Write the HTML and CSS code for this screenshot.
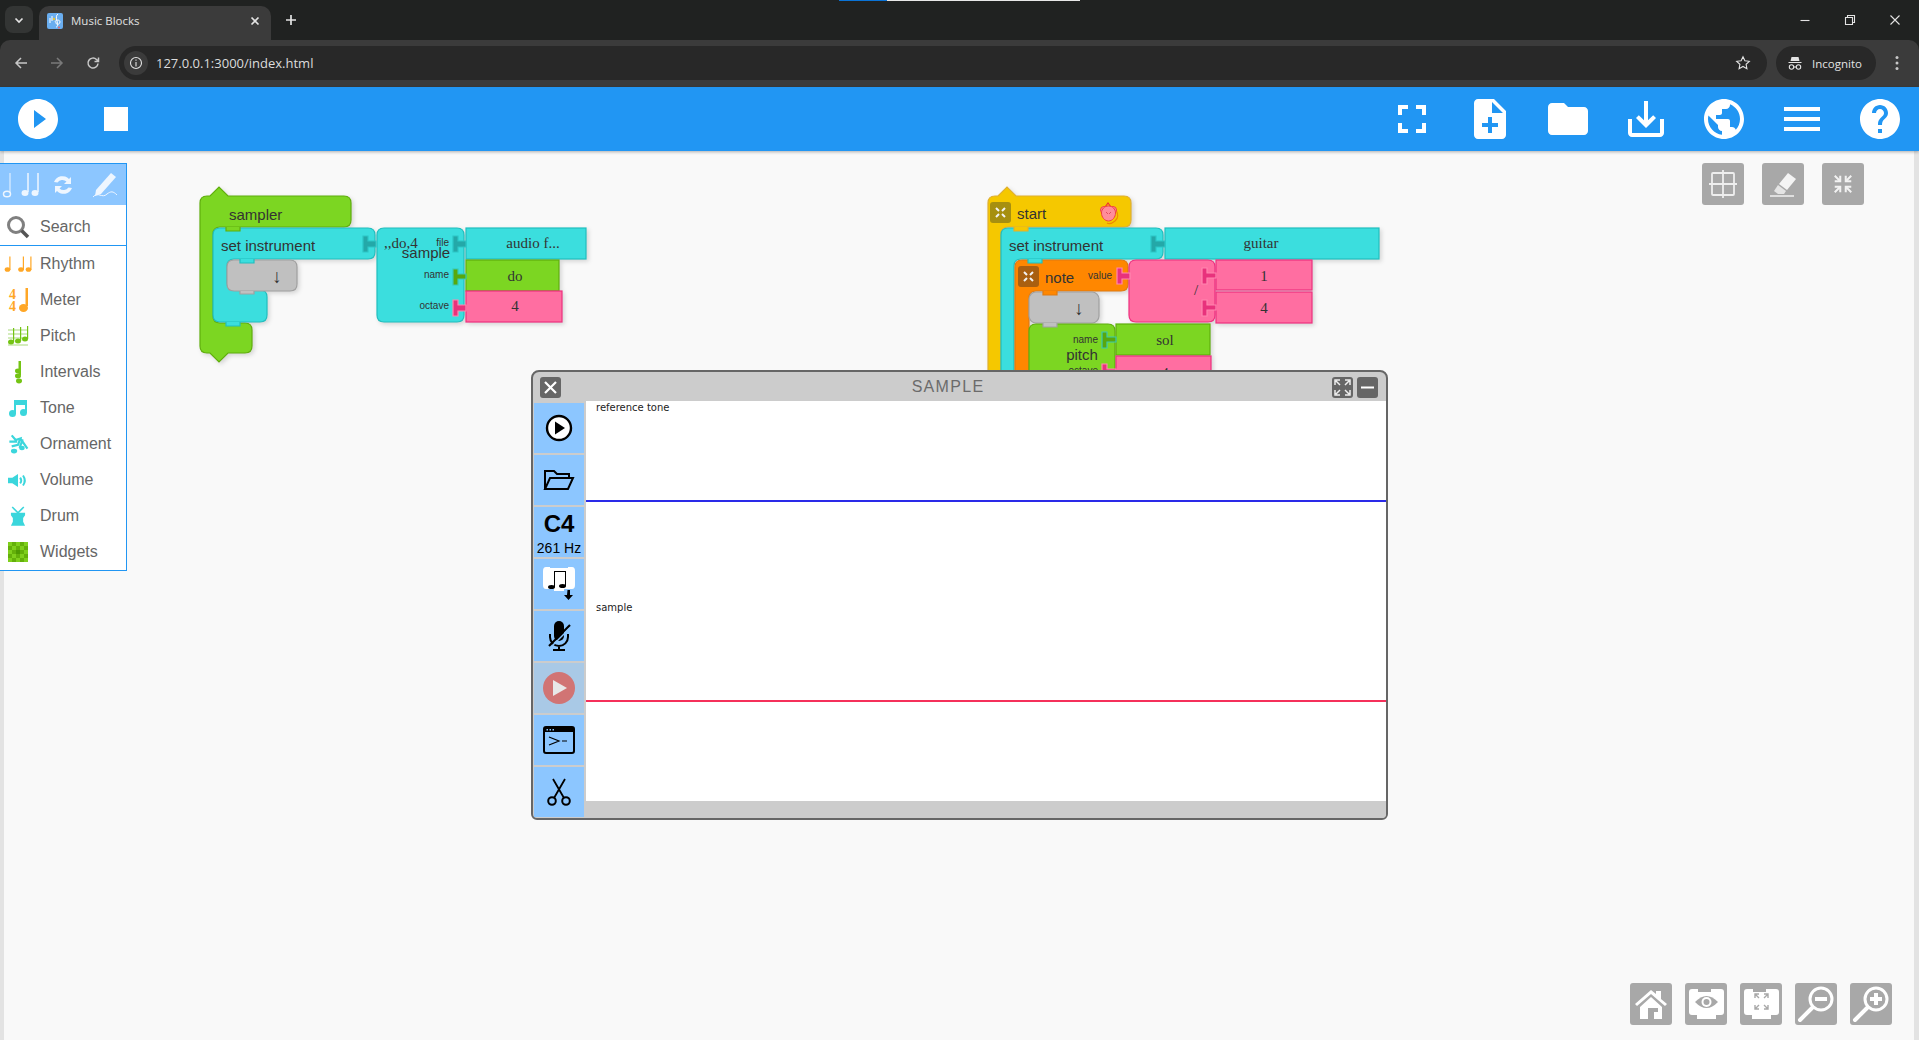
FILE: index.html
```html
<!DOCTYPE html>
<html lang="en">
<head>
<meta charset="utf-8">
<title>Music Blocks</title>
<link rel="stylesheet" href="styles.css">
</head>
<body>
<div class="app">

  <header class="chrome">
    <div class="share-strip"><span class="share-blue"></span><span class="share-white"></span></div>
    <div class="tabstrip">
      <button class="tab-search"><svg width="12" height="12" viewBox="0 0 12 12"><path class="ch-stroke" d="M2.500 4.500 6 8l3.500-3.500"/></svg></button>
      <div class="tab">
        <svg class="favicon" width="16" height="16" viewBox="0 0 16 16"><rect width="16" height="16" rx="2" fill="#6aaef0"/><path d="M11 1c-2 1-2 4-1 7s1 6-1 6M8 9c0-2 5-3 5 0s-5 3-4 0" fill="none" stroke="#fff" stroke-width="1"/><path d="M3 5v5M5 3v5" stroke="#fff"/><circle cx="7" cy="6" r="1.200" fill="#e8c43a"/><circle cx="12" cy="14.500" r="1" fill="#e66"/></svg>
        <span class="tab-title">Music Blocks</span>
        <svg class="tab-close" width="12" height="12" viewBox="0 0 12 12"><path class="ch-stroke" d="M2.500 2.500l7 7M9.500 2.500l-7 7"/></svg>
      </div>
      <svg class="new-tab" width="14" height="14" viewBox="0 0 14 14"><path class="ch-stroke" d="M7 2v10M2 7h10"/></svg>
      <div class="win-controls">
        <svg width="12" height="12" viewBox="0 0 12 12"><path class="ch-thin" d="M1.500 6.500h9"/></svg>
        <svg width="12" height="12" viewBox="0 0 12 12"><path class="ch-thin" d="M1.500 3.500h7v7h-7zM3.500 3.500v-2h7v7h-2"/></svg>
        <svg width="12" height="12" viewBox="0 0 12 12"><path class="ch-thin" d="M1.500 1.500l9 9M10.500 1.500l-9 9"/></svg>
      </div>
    </div>
    <div class="toolbar">
      <svg class="nav-ico" width="14" height="14" viewBox="0 0 14 14"><path class="ch-nav" d="M13 7H2M7 2 2 7l5 5"/></svg>
      <svg class="nav-ico dim" width="14" height="14" viewBox="0 0 14 14"><path class="ch-nav" d="M1 7h11M7 2l5 5-5 5"/></svg>
      <svg class="nav-ico" width="14" height="14" viewBox="0 0 14 14"><path class="ch-nav" d="M12 7.500A5 5 0 1 1 10.500 3.500L12.500 5.500M12.500 1.500v4h-4"/></svg>
      <div class="urlbar">
        <span class="info"><svg width="14" height="14" viewBox="0 0 14 14"><circle class="ch-thin" cx="7" cy="7" r="5.500"/><path class="ch-thin" d="M7 6v4.500M7 3.500v1.300"/></svg></span>
        <span class="url">127.0.0.1:3000/index.html</span>
        <svg class="star" width="16" height="16" viewBox="0 0 16 16"><path class="ch-thin" d="m8 1.800 1.900 4 4.400.5-3.200 3 .8 4.400L8 11.500l-3.900 2.200.8-4.400-3.200-3 4.400-.5z"/></svg>
      </div>
      <div class="incognito">
        <svg width="16" height="16" viewBox="0 0 16 16"><path d="M4.500 2h7l1 4h-9zM1.500 7h13v1h-13z" fill="#e3e3e3"/><circle class="ch-thin" cx="4.500" cy="12" r="2.200"/><circle class="ch-thin" cx="11.500" cy="12" r="2.200"/><path class="ch-thin" d="M6.700 12h2.600"/></svg>
        <span>Incognito</span>
      </div>
      <svg class="kebab" width="4" height="16" viewBox="0 0 4 16"><circle cx="2" cy="2.500" r="1.500"/><circle cx="2" cy="8" r="1.500"/><circle cx="2" cy="13.500" r="1.500"/></svg>
    </div>
  </header>

  <nav class="navbar">
    <div class="nav-group">
      <svg class="tool" viewBox="0 0 24 24"><path d="M12 2C6.480 2 2 6.480 2 12s4.480 10 10 10 10-4.480 10-10S17.520 2 12 2zm-2 14.500v-9l6 4.500-6 4.500z"/></svg>
      <svg class="tool" viewBox="0 0 24 24"><path d="M6 6h12v12H6z"/></svg>
    </div>
    <div class="nav-group">
      <svg class="tool" viewBox="0 0 24 24"><path d="M7 14H5v5h5v-2H7v-3zm-2-4h2V7h3V5H5v5zm12 7h-3v2h5v-5h-2v3zM14 5v2h3v3h2V5h-5z"/></svg>
      <svg class="tool" viewBox="0 0 24 24"><path d="M14 2H6c-1.100 0-1.990.9-1.990 2L4 20c0 1.100.89 2 1.990 2H18c1.100 0 2-.9 2-2V8l-6-6zm2 14h-3v3h-2v-3H8v-2h3v-3h2v3h3v2zm-3-7V3.500L18.500 9H13z"/></svg>
      <svg class="tool" viewBox="0 0 24 24"><path d="M10 4H4c-1.100 0-1.990.9-1.990 2L2 18c0 1.100.9 2 2 2h16c1.100 0 2-.9 2-2V8c0-1.100-.9-2-2-2h-8l-2-2z"/></svg>
      <svg class="tool" viewBox="0 0 24 24"><path d="M19 12v7H5v-7H3v7c0 1.100.9 2 2 2h14c1.100 0 2-.9 2-2v-7h-2zm-6 .670 2.590-2.580L17 11.500l-5 5-5-5 1.410-1.410L11 12.670V3h2z"/></svg>
      <svg class="tool" viewBox="0 0 24 24"><path d="M12 2C6.480 2 2 6.480 2 12s4.480 10 10 10 10-4.480 10-10S17.520 2 12 2zm-1 17.930c-3.950-.49-7-3.850-7-7.930 0-.62.08-1.210.21-1.790L9 15v1c0 1.100.9 2 2 2v1.930zm6.900-2.540c-.26-.81-1-1.390-1.900-1.390h-1v-3c0-.55-.45-1-1-1H8v-2h2c.55 0 1-.45 1-1V7h2c1.100 0 2-.9 2-2v-.41c2.930 1.190 5 4.060 5 7.410 0 2.080-.8 3.970-2.100 5.390z"/></svg>
      <svg class="tool" viewBox="0 0 24 24"><path d="M3 18h18v-2H3v2zm0-5h18v-2H3v2zm0-7v2h18V6H3z"/></svg>
      <svg class="tool" viewBox="0 0 24 24"><path d="M12 2C6.480 2 2 6.480 2 12s4.480 10 10 10 10-4.480 10-10S17.520 2 12 2zm1 17h-2v-2h2v2zm2.070-7.750-.9.920C13.450 12.900 13 13.500 13 15h-2v-.5c0-1.100.45-2.100 1.170-2.830l1.240-1.260c.37-.36.59-.86.59-1.410 0-1.100-.9-2-2-2s-2 .9-2 2H8c0-2.210 1.790-4 4-4s4 1.790 4 4c0 .88-.36 1.680-.93 2.250z"/></svg>
    </div>
  </nav>

  <main class="workspace">

    <!-- Block stacks sit on a free canvas; the viewBoxes use page coordinates -->
    <svg class="stack stack-a" width="410" height="190" viewBox="190 180 410 190">
      <g class="blk">
        <path class="g" d="M207 196H210L219 187L228 196H344Q351 196 351 203V220Q351 227 344 227H220Q213 227 213 234V316Q213 323 220 323H245Q252 323 252 330V346Q252 353 245 353H228L219 362L210 353H207Q200 353 200 346V203Q200 196 207 196Z"/>
        <path class="c" d="M220 228H368Q375 228 375 235V252Q375 259 368 259H234Q227 259 227 266V283Q227 290 234 290H260Q267 290 267 297V315Q267 322 260 322H220Q213 322 213 315V235Q213 228 220 228Z"/>
        <path class="n" d="M234 260H290Q297 260 297 267V284Q297 291 290 291H234Q227 291 227 284V267Q227 260 234 260Z"/>
        <path class="c" d="M384 228H457Q464 228 464 235V315Q464 322 457 322H384Q377 322 377 315V235Q377 228 384 228Z"/>
        <rect class="c" x="466" y="228" width="120" height="31"/>
        <rect class="g" x="466" y="260" width="93" height="31"/>
        <rect class="p" x="466" y="291" width="96" height="31"/>
      </g>
      <path class="g" d="M226 227v4h14v-4"/>
      <path class="c" d="M240 259v4h14v-4"/>
      <path class="c" d="M226 322v4h14v-4"/>
      <path class="n" d="M240 291v3h14v-3"/>
      <path class="conn-c" d="M363 236h5v5h8v6h-8v5h-5z"/>
      <path class="conn-c" d="M453 236h5v5h8v6h-8v5h-5z"/>
      <path class="conn-g" d="M453 269h5v5h8v5h-8v6h-5z"/>
      <path class="conn-p" d="M453 300h5v5h8v6h-8v5h-5z"/>
      <text class="t-sans" x="229" y="220">sampler</text>
      <text class="t-sans" x="221" y="251">set instrument</text>
      <text class="t-arrow" x="277" y="283">↓</text>
      <text class="t-serif" x="384" y="248">,,do,4</text>
      <text class="t-sans t-mid" x="426" y="258">sample</text>
      <text class="t-lab" x="449" y="246">file</text>
      <text class="t-lab" x="449" y="278">name</text>
      <text class="t-lab" x="449" y="309">octave</text>
      <text class="t-serif t-mid" x="533" y="248">audio f...</text>
      <text class="t-serif t-mid" x="515" y="281">do</text>
      <text class="t-serif t-mid" x="515" y="311">4</text>
    </svg>

    <svg class="stack stack-b" width="420" height="200" viewBox="970 180 420 200">
      <g class="blk">
        <path class="y" d="M995 196H998L1007 187L1016 196H1124Q1131 196 1131 203V220Q1131 227 1124 227H1008Q1001 227 1001 234V380H988V203Q988 196 995 196Z"/>
        <path class="c" d="M1008 228H1156Q1163 228 1163 235V252Q1163 259 1156 259H1021Q1014 259 1014 266V380H1001V235Q1001 228 1008 228Z"/>
        <rect class="c" x="1165" y="228" width="214" height="31"/>
        <path class="o" d="M1022 260H1121Q1128 260 1128 267V284Q1128 291 1121 291H1036Q1029 291 1029 298V380H1015V267Q1015 260 1022 260Z"/>
        <path class="p" d="M1136 260H1208Q1215 260 1215 267V315Q1215 322 1208 322H1136Q1129 322 1129 315V267Q1129 260 1136 260Z"/>
        <rect class="p" x="1216" y="260" width="96" height="30"/>
        <rect class="p" x="1216" y="292" width="96" height="31"/>
        <rect class="n" x="1029" y="292" width="70" height="31" rx="7"/>
        <path class="g" d="M1036 324H1108Q1115 324 1115 331V380H1029V331Q1029 324 1036 324Z"/>
        <rect class="g" x="1116" y="324" width="94" height="31"/>
        <rect class="p" x="1116" y="356" width="95" height="30"/>
      </g>
      <path class="y" d="M1014 227v4h14v-4"/>
      <path class="c" d="M1028 259v4h14v-4"/>
      <path class="o" d="M1043 291v4h14v-4"/>
      <path class="n" d="M1043 323v4h14v-4"/>
      <path class="conn-c" d="M1151 236h5v5h9v6h-9v5h-5z"/>
      <path class="conn-p" d="M1117 268h5v5h8v6h-8v5h-5z"/>
      <path class="conn-p" d="M1202 268h5v5h9v5h-9v6h-5z"/>
      <path class="conn-p" d="M1202 300h5v5h9v5h-9v6h-5z"/>
      <path class="conn-g" d="M1102 332h5v5h9v5h-9v6h-5z"/>
      <path class="conn-p" d="M1102 364h5v5h9v5h-9v6h-5z"/>
      <rect class="collapse-y" x="990" y="202" width="21" height="21" rx="3"/>
      <rect class="collapse-o" x="1018" y="266" width="21" height="21" rx="3"/>
      <path class="collapse-ico" d="M996 208l3 3M1005 208l-3 3M996 217l3-3M1005 217l-3-3M1024 272l3 3M1033 272l-3 3M1024 281l3-3M1033 281l-3-3"/>
      <path class="mouse-tail" d="M1116 210q4 7-1 11t-8 2"/>
      <path class="mouse-crest" d="M1105 207l3-4 3 4"/>
      <circle class="mouse-body" cx="1104" cy="210" r="3.500"/>
      <circle class="mouse-body" cx="1113" cy="210" r="3.500"/>
      <path class="mouse-body" d="M1108.500 206c4 0 7 3 7 7s-3 8-7 8-7-4-7-8 3-7 7-7z"/>
      <path class="mouse-line" d="M1106 212l2 2M1111 212l-2 2"/>
      <text class="t-sans" x="1017" y="219">start</text>
      <text class="t-sans" x="1009" y="251">set instrument</text>
      <text class="t-sans" x="1045" y="283">note</text>
      <text class="t-lab" x="1112" y="279">value</text>
      <text class="t-arrow" x="1079" y="315">↓</text>
      <text class="t-serif t-mid" x="1261" y="248">guitar</text>
      <text class="t-serif" x="1194" y="295">/</text>
      <text class="t-serif t-mid" x="1264" y="281">1</text>
      <text class="t-serif t-mid" x="1264" y="313">4</text>
      <text class="t-serif t-mid" x="1165" y="345">sol</text>
      <text class="t-serif t-mid" x="1165" y="378">4</text>
      <text class="t-lab" x="1098" y="343">name</text>
      <text class="t-lab" x="1098" y="374">octave</text>
      <text class="t-sans t-mid" x="1082" y="360">pitch</text>
    </svg>

    <aside class="palette">
      <div class="pal-head">
        <svg width="127" height="40" viewBox="0 0 127 40">
          <g class="pal-white">
            <ellipse cx="7" cy="30" rx="3.500" ry="2.800" fill="none" stroke="#eef6ff" stroke-width="1.500"/>
            <path d="M10 29V9" stroke="#eef6ff" stroke-width="1" fill="none"/>
            <ellipse cx="25" cy="29" rx="3.500" ry="3"/><ellipse cx="35" cy="29" rx="3.500" ry="3"/>
            <path d="M28 28V9M38 28V9" stroke="#eef6ff" stroke-width="1.500" fill="none"/>
            <path d="M54 18a9 9 0 0 1 15-3l2-2v7h-7l2.500-2.500a6 6 0 0 0-9 1zM72 24a9 9 0 0 1-15 3l-2 2v-7h7l-2.500 2.500a6 6 0 0 0 9-1z"/>
            <path d="M96 26 111 9l5 4-15 17-6 2z"/>
            <path d="M93 33c5-6 9 2 14-3 4-3 6-3 10 1" fill="none" stroke="#eef6ff" stroke-width="1"/>
          </g>
        </svg>
      </div>
      <div class="pal-search">
        <span class="pal-ico"><svg width="24" height="24" viewBox="0 0 24 24"><circle cx="10" cy="10" r="7.500" fill="none" stroke="#808080" stroke-width="3"/><path d="m15.500 15.500 6.500 6.500" stroke="#555" stroke-width="3.500"/></svg></span>
        <span>Search</span>
      </div>
      <ul class="pal-list">
        <li class="pal-item"><span class="pal-ico"><svg width="28" height="18" viewBox="0 0 28 18"><g fill="#ffa726"><ellipse cx="3.500" cy="14.500" rx="2.800" ry="2.300"/><ellipse cx="17" cy="14.500" rx="2.800" ry="2.300"/><ellipse cx="24.500" cy="14.500" rx="2.800" ry="2.300"/><path d="M5.300 15V1.500h1.200V15zM18.800 15V1.500H20V15zM26.300 15V1.500h1.200V15z"/></g></svg></span>Rhythm</li>
        <li class="pal-item"><span class="pal-ico"><svg width="28" height="26" viewBox="0 0 28 26"><g fill="#ffa726"><path d="M21.500 19V1H24v18z"/><ellipse cx="19.500" cy="21" rx="4.500" ry="4"/></g><text class="ico-digit" x="5" y="12">4</text><text class="ico-digit" x="5" y="24">4</text></svg></span>Meter</li>
        <li class="pal-item"><span class="pal-ico"><svg width="28" height="20" viewBox="-4 0 28 20"><path d="M0 4h20M0 8h20M0 12h20M0 19h20" stroke="#a9d97a"/><g fill="#74c414"><ellipse cx="3" cy="16" rx="3" ry="2.500"/><ellipse cx="10" cy="15" rx="3" ry="2.500"/><ellipse cx="17" cy="13" rx="3" ry="2.500"/><path d="M5 16V2h1.200v14zM12 15V1h1.200v14zM19 13V0h1.200v13z"/></g></svg></span>Pitch</li>
        <li class="pal-item"><span class="pal-ico"><svg width="28" height="24" viewBox="0 0 28 24"><g fill="#74c414"><path d="M14.500 1H17v14h-2.500z"/><ellipse cx="14" cy="11" rx="3" ry="2.400"/><ellipse cx="14" cy="16" rx="3" ry="2.400"/><ellipse cx="15" cy="21" rx="3" ry="2.400"/></g></svg></span>Intervals</li>
        <li class="pal-item"><span class="pal-ico"><svg width="18" height="17" viewBox="0 0 18 17"><path fill="#3bd6dc" d="M5 0h13v13h-2V5H7v9H5z"/><circle cx="3.500" cy="13.500" r="3.500" fill="#3bd6dc"/><circle cx="14.500" cy="12.500" r="3.500" fill="#3bd6dc"/></svg></span>Tone</li>
        <li class="pal-item"><span class="pal-ico"><svg width="22" height="24" viewBox="0 0 28 24"><g fill="none" stroke="#3bd6dc" stroke-width="2.800"><path d="M6 1l5 6 6-2-3 8-8 2M17 5l9 13M20 6l-4 11M3 9h10"/></g><g fill="#3bd6dc"><ellipse cx="9" cy="21" rx="4" ry="3"/><ellipse cx="19" cy="17" rx="3.500" ry="2.800"/></g></svg></span>Ornament</li>
        <li class="pal-item"><span class="pal-ico"><svg width="20" height="15" viewBox="0 0 28 18"><path fill="#3bd6dc" d="M0 5h6l8-5v18l-8-5H0z"/><g fill="none" stroke="#3bd6dc" stroke-width="2.800"><path d="M17 5q3 4 0 8M21 2q5 7 0 14"/></g></svg></span>Volume</li>
        <li class="pal-item"><span class="pal-ico"><svg width="18" height="20" viewBox="0 0 28 30"><path fill="#3bd6dc" d="M3 10h22v4l-3 4v6l3 6H3l3-6v-6l-3-4z"/><path d="M5 1l9 9 9-9" fill="none" stroke="#3bd6dc" stroke-width="2.500"/></svg></span>Drum</li>
        <li class="pal-item"><span class="pal-ico"><svg width="20" height="20" viewBox="0 0 20 20"><rect width="20" height="20" fill="#64b00a"/><path fill="#7fcf1c" d="M0 0h4v4H0zM8 0h4v4H8zM16 0h4v4h-4zM4 4h4v4H4zM12 4h4v4h-4zM0 8h4v4H0zM16 8h4v4h-4zM4 12h4v4H4zM12 12h4v4h-4zM0 16h4v4H0zM8 16h4v4H8zM16 16h4v4h-4z"/><path fill="#4e9a02" d="M8 8h4v4H8z"/></svg></span>Widgets</li>
      </ul>
    </aside>

    <div class="aux-tools">
      <button class="icon-btn"><svg width="28" height="28" viewBox="0 0 28 28"><g fill="none" stroke="#eee" stroke-width="1.800"><rect x="3" y="3" width="22" height="22" rx="1"/><path d="M14 0v28M0 14h28"/></g></svg></button>
      <button class="icon-btn"><svg width="28" height="28" viewBox="0 0 28 28"><path fill="#f4f4f4" d="m10 14 9-11 8 6-9 11z"/><path fill="#e4e4e4" d="m9 15 8 6-2 3H9l-4-3z"/><path d="M1 26h24" stroke="#f2f2f2" stroke-width="1.500"/></svg></button>
      <button class="icon-btn"><svg width="22" height="22" viewBox="0 0 24 24"><g fill="none" stroke="#f2f2f2" stroke-width="2.200"><path d="M3 3l6 6M21 3l-6 6M3 21l6-6M21 21l-6-6"/><path d="M9 3v6H3M15 3v6h6M9 21v-6H3M15 21v-6h6"/></g></svg></button>
    </div>

    <div class="home-tools">
      <button class="icon-btn"><svg width="34" height="34" viewBox="0 0 34 34"><path fill="#fff" d="M1 17 17 3l5 4V4h5v8l6 5-2 2-14-12L3 19zM6 20 17 10l11 10v12h-8V21h-6v11H6z"/><path fill="#a8a8a8" d="M20 21h4v4h-4z"/></svg></button>
      <button class="icon-btn"><svg width="35" height="30" viewBox="0 0 35 30"><path fill="#fff" d="M3 0h6v3h13V0h10q3 0 3 3v20q0 3-3 3h-5v4H8v-4H3q-3 0-3-3V3q0-3 3-3z"/><path d="M6 13q11.500-12 23 0-11.500 12-23 0z" fill="#a8a8a8"/><circle cx="17.500" cy="13" r="5" fill="#fff"/><circle cx="17.500" cy="13" r="3" fill="#a8a8a8"/></svg></button>
      <button class="icon-btn"><svg width="35" height="30" viewBox="0 0 35 30"><path fill="#fff" d="M3 0h6v3h13V0h10q3 0 3 3v20q0 3-3 3h-5v4H8v-4H3q-3 0-3-3V3q0-3 3-3z"/><g fill="none" stroke="#a8a8a8" stroke-width="1.400"><path d="M11 9V5h4M24 9V5h-4M11 16v4h4M24 16v4h-4M11 5l4 4M24 5l-4 4M11 20l4-4M24 20l-4-4"/></g></svg></button>
      <button class="icon-btn"><svg width="38" height="38" viewBox="0 0 38 38"><g fill="none" stroke="#fff"><circle cx="24" cy="14" r="11" stroke-width="3"/><path d="M15 23 3 35" stroke-width="4" stroke-linecap="round"/><path d="M18 14h12" stroke-width="4"/></g></svg></button>
      <button class="icon-btn"><svg width="38" height="38" viewBox="0 0 38 38"><g fill="none" stroke="#fff"><circle cx="24" cy="14" r="11" stroke-width="3"/><path d="M15 23 3 35" stroke-width="4" stroke-linecap="round"/><path d="M18 14h12M24 8v12" stroke-width="4"/></g></svg></button>
    </div>

    <section class="sampler-window">
      <div class="win-title">
        <button class="win-btn"><svg width="15" height="15" viewBox="0 0 15 15"><path d="M2 2l11 11M13 2 2 13" stroke="#fff" stroke-width="2.200"/></svg></button>
        <span class="win-name">SAMPLE</span>
        <button class="win-btn"><svg width="17" height="17" viewBox="0 0 17 17"><g fill="none" stroke="#eee" stroke-width="1.500"><path d="M1 6V1h5M11 1h5v5M1 11v5h5M16 11v5h-5M2 2l4 4M15 2l-4 4M2 15l4-4M15 15l-4-4"/></g></svg></button>
        <button class="win-btn"><svg width="15" height="15" viewBox="0 0 15 15"><path d="M1 7.500h13" stroke="#fff" stroke-width="2"/></svg></button>
      </div>
      <div class="win-body">
        <div class="win-side">
          <button class="side-btn"><svg width="30" height="30" viewBox="0 0 30 30"><circle cx="15" cy="15" r="12" fill="#fff" stroke="#000" stroke-width="2.400"/><path d="M11 8.500v13l10-6.500z"/></svg></button>
          <button class="side-btn"><svg width="32" height="24" viewBox="0 0 32 24"><path fill="none" stroke="#000" stroke-width="2" d="M2 21V3h9l3 3h12v4M2 21h23l5-11H7z"/></svg></button>
          <div class="side-btn pitch-btn"><b>C4</b><span>261 Hz</span></div>
          <button class="side-btn"><svg width="34" height="34" viewBox="0 0 34 34"><path fill="#fff" d="M4 0h4v1h18V0h4q3 0 3 4v14q0 4-3 4H22v2H12v-2H4q-3 0-3-4V4q0-4 3-4z"/><g fill="#000"><path d="M12 4h12v15h-1V5H13v15h-1z"/><ellipse cx="9.500" cy="20" rx="3.500" ry="2"/><ellipse cx="20.500" cy="19" rx="3.500" ry="2"/><path d="M25.500 23h2.500v5h3l-4.500 5-4.500-5h3z"/></g></svg></button>
          <button class="side-btn"><svg width="24" height="32" viewBox="0 0 24 32"><path d="M7 6a5 5 0 0 1 10 0v10a5 5 0 0 1-10 0z"/><path fill="none" stroke="#000" stroke-width="2" d="M3 14v3a9 9 0 0 0 18 0v-3M12 26v3"/><path d="M6 29h12v2H6z"/><path d="M23 5 2 26" stroke="#000" stroke-width="2.200"/><path d="M23 8 6 25" stroke="#8cc6ff" stroke-width="1.500"/></svg></button>
          <button class="side-btn rec-btn"><svg width="32" height="32" viewBox="0 0 32 32"><circle cx="16" cy="16" r="16" fill="#d17474"/><path d="M10 8v16l14-8z" fill="#e8e8e8"/></svg></button>
          <button class="side-btn"><svg width="32" height="28" viewBox="0 0 32 28"><rect x="1" y="1" width="30" height="26" rx="2" fill="none" stroke="#000" stroke-width="2"/><path d="M1 2h30v4H1z"/><path d="M6 11l10 4-10 4M19 15h5" fill="none" stroke="#000" stroke-width="1.200"/><path d="M3.500 3h1.500v1.500H3.500zM6.500 3H8v1.500H6.500zM9.500 3H11v1.500H9.500z" fill="#8cc6ff"/></svg></button>
          <button class="side-btn"><svg width="24" height="28" viewBox="0 0 24 28"><circle cx="5" cy="23" r="3.800" fill="none" stroke="#000" stroke-width="2"/><circle cx="19" cy="23" r="3.800" fill="none" stroke="#000" stroke-width="2"/><path d="M7 20 18 1M17 20 6 1" stroke="#000" stroke-width="1.800"/></svg></button>
        </div>
        <div class="win-main">
          <div class="wave-area">
            <div class="track"><span class="track-label">reference tone</span><span class="track-line line-blue"></span></div>
            <div class="track"><span class="track-label">sample</span><span class="track-line line-red"></span></div>
          </div>
          <div class="win-footer"></div>
        </div>
      </div>
    </section>

  </main>
</div>
</body>
</html>
```

FILE: styles.css
```css
* { box-sizing: border-box; }
html, body { margin: 0; padding: 0; height: 100%; overflow: hidden; }
body { font-family: "Liberation Sans", Arial, sans-serif; background: #f9f9f9; }
button { border: 0; padding: 0; margin: 0; font: inherit; cursor: pointer; display: flex; align-items: center; justify-content: center; }
ul { list-style: none; margin: 0; padding: 0; }

.app { display: flex; flex-direction: column; height: 1040px; width: 1919px; }

/* Browser chrome */
.chrome { position: relative; height: 87px; background: #202221; flex: none; font-family: "Open Sans", "Noto Sans", sans-serif; color: #e3e3e3; }
.share-strip { position: absolute; top: 0; left: 839px; display: flex; height: 1px; }
.share-blue { width: 48px; background: #0a73d6; }
.share-white { width: 193px; background: #e8e8e8; }
.ch-stroke { fill: none; stroke: #e3e3e3; stroke-width: 1.700; }
.ch-nav { fill: none; stroke: #c7c7c7; stroke-width: 1.500; }
.ch-thin { fill: none; stroke: #e3e3e3; stroke-width: 1.100; }
.tabstrip { height: 40px; display: flex; align-items: flex-end; padding-left: 5px; }
.tab-search { width: 28px; height: 27px; border-radius: 8px; background: #333534; margin-bottom: 7px; }
.tab { width: 232px; height: 34px; margin-left: 6px; background: #3b3b3b; border-radius: 10px 10px 0 0; display: flex; align-items: center; padding: 0 10px 5px 8px; }
.favicon { flex: none; }
.tab-title { font-size: 11.500px; margin-left: 8px; flex: 1; color: #e0e0e0; }
.new-tab { margin: 0 0 13px 13px; }
.win-controls { margin-left: auto; display: flex; gap: 33px; align-self: center; padding-right: 18px; }
.toolbar { height: 47px; background: #3b3b3b; border-radius: 10px 10px 0 0; display: flex; align-items: center; padding: 0 0 1px 14px; }
.nav-ico { flex: none; margin-right: 22px; }
.nav-ico.dim { opacity: .45; }
.urlbar { width: 1648px; height: 34px; margin-left: -3px; border-radius: 17px; background: #282828; display: flex; align-items: center; padding-left: 5px; }
.info { width: 24px; height: 24px; border-radius: 50%; background: #3b3b3b; display: flex; align-items: center; justify-content: center; }
.url { font-size: 13px; margin-left: 8px; flex: 1; color: #dcdcdc; }
.star { margin-right: 16px; }
.incognito { width: 100px; height: 34px; margin-left: 9px; border-radius: 17px; background: #282828; display: flex; align-items: center; gap: 9px; padding-left: 11px; font-size: 11.500px; }
.kebab { margin-left: 19px; fill: #c8c8c8; }

/* Blue app bar */
.navbar { height: 64px; flex: none; background: #2196f3; display: flex; align-items: center; justify-content: space-between; box-shadow: 0 1px 3px rgba(0,0,0,.3); position: relative; z-index: 5; padding: 0 15px 0 14px; }
.nav-group { display: flex; gap: 30px; }
.tool { width: 48px; height: 48px; fill: #fff; display: block; }

/* Workspace */
.workspace { position: relative; flex: 1; background: #f9f9f9; border-left: 4px solid #e3e3e3; border-right: 5px solid #e3e3e3; }
.stack { position: absolute; overflow: visible; }
.stack-a { left: 186px; top: 29px; }
.stack-b { left: 966px; top: 29px; }
.blk { filter: drop-shadow(2px 2px 2px rgba(0,0,0,.14)); }
.g { fill: #7cd622; stroke: #5fae0c; stroke-width: 1.200; }
.c { fill: #3bdede; stroke: #20bebe; stroke-width: 1.200; }
.n { fill: #c0c0c0; stroke: #a0a0a0; stroke-width: 1.200; }
.p { fill: #ff6ea1; stroke: #ef2f7f; stroke-width: 1.200; }
.y { fill: #f5c800; stroke: #e0b030; stroke-width: 1.200; }
.o { fill: #ff8700; stroke: #e07a10; stroke-width: 1.200; }
.conn-c { fill: #24a8a8; stroke: #2cc6c6; stroke-width: 1.200; }
.conn-g { fill: #58a80c; stroke: #3bc8b0; stroke-width: 1.200; }
.conn-p { fill: #e8327c; stroke: #ff86b0; stroke-width: 1.200; }
.collapse-y { fill: #a68f10; }
.collapse-o { fill: #a95f10; }
.collapse-ico { fill: none; stroke: #f2f2f2; stroke-width: 2; }
.mouse-tail { fill: none; stroke: #f08a00; stroke-width: 1.200; }
.mouse-crest { fill: none; stroke: #f03030; stroke-width: 1.200; }
.mouse-body { fill: #ff8d9a; stroke: #f04040; stroke-width: 1; }
.mouse-line { fill: none; stroke: #e05060; stroke-width: 1; }
.t-sans { font-family: "Liberation Sans", Arial, sans-serif; font-size: 15px; fill: #333; }
.t-serif { font-family: "Liberation Serif", "Times New Roman", serif; font-size: 15px; fill: #333; }
.t-arrow { font-family: "Liberation Serif", "Times New Roman", serif; font-size: 19px; fill: #333; text-anchor: middle; }
.t-lab { font-family: "Liberation Sans", Arial, sans-serif; font-size: 10px; fill: #333; text-anchor: end; }
.t-mid { text-anchor: middle; }

/* Palette */
.palette { position: absolute; left: -4px; top: 12px; width: 127px; height: 408px; background: #fff; border: 1px solid #2196f3; border-left: 0; display: flex; flex-direction: column; color: #666; font-size: 16px; }
.pal-head { height: 41px; background: #8cc6ff; flex: none; }
.pal-head svg { display: block; }
.pal-white { fill: #eef6ff; }
.pal-search { height: 41px; flex: none; border-bottom: 1px solid #2196f3; display: flex; align-items: center; padding-top: 3px; }
.pal-ico { width: 40px; flex: none; display: flex; align-items: center; justify-content: center; padding-right: 4px; }
.ico-digit { font-family: "Liberation Serif", serif; font-weight: 700; font-size: 14px; fill: #ffa726; }
.pal-list { display: flex; flex-direction: column; }
.pal-item { height: 36px; display: flex; align-items: center; }

/* Canvas tools */
.icon-btn { background: #a8a8a8; border-radius: 3px; width: 42px; height: 42px; flex: none; }
.aux-tools { position: absolute; top: 12px; left: 1698px; display: flex; gap: 18px; }
.home-tools { position: absolute; top: 832px; left: 1626px; display: flex; gap: 13px; }

/* Sample widget window */
.sampler-window { position: absolute; left: 527px; top: 219px; width: 857px; height: 450px; border: 2px solid #666; border-radius: 8px 8px 6px 6px; background: #ccc; display: flex; flex-direction: column; overflow: hidden; z-index: 3; }
.win-title { height: 28px; flex: none; display: flex; align-items: center; padding: 0 8px 0 7px; gap: 4px; margin-top: 1px; }
.win-btn { width: 21px; height: 21px; background: #666; border-radius: 3px; flex: none; }
.win-name { flex: 1; text-align: center; font-size: 16px; color: #6b6b6b; letter-spacing: 1.300px; padding-left: 3px; }
.win-body { flex: 1; display: flex; min-height: 0; }
.win-side { width: 53px; flex: none; padding: 2px 2px 0 1px; display: flex; flex-direction: column; gap: 2px; }
.side-btn { width: 50px; height: 50px; flex: none; background: #8cc6ff; display: flex; align-items: center; justify-content: center; }
.pitch-btn { flex-direction: column; color: #000; font-size: 14px; gap: 0; }
.pitch-btn b { font-size: 24px; line-height: 25px; margin-top: 3px; }
.pitch-btn span { line-height: 17px; margin-top: 4px; }
.rec-btn { background: #a9c9e6; }
.win-main { flex: 1; display: flex; flex-direction: column; }
.wave-area { height: 400px; background: #fff; flex: none; display: flex; flex-direction: column; }
.track { height: 200px; flex: none; display: flex; flex-direction: column; }
.track-label { height: 14px; flex: none; padding: 1px 0 0 10px; font-family: "DejaVu Sans", sans-serif; font-size: 10px; line-height: 12px; color: #222; }
.track-line { height: 2px; margin-top: 85px; flex: none; }
.line-blue { background: #2a2ae8; }
.line-red { background: #f5305a; }
.win-footer { flex: 1; background: #ccc; }
```
